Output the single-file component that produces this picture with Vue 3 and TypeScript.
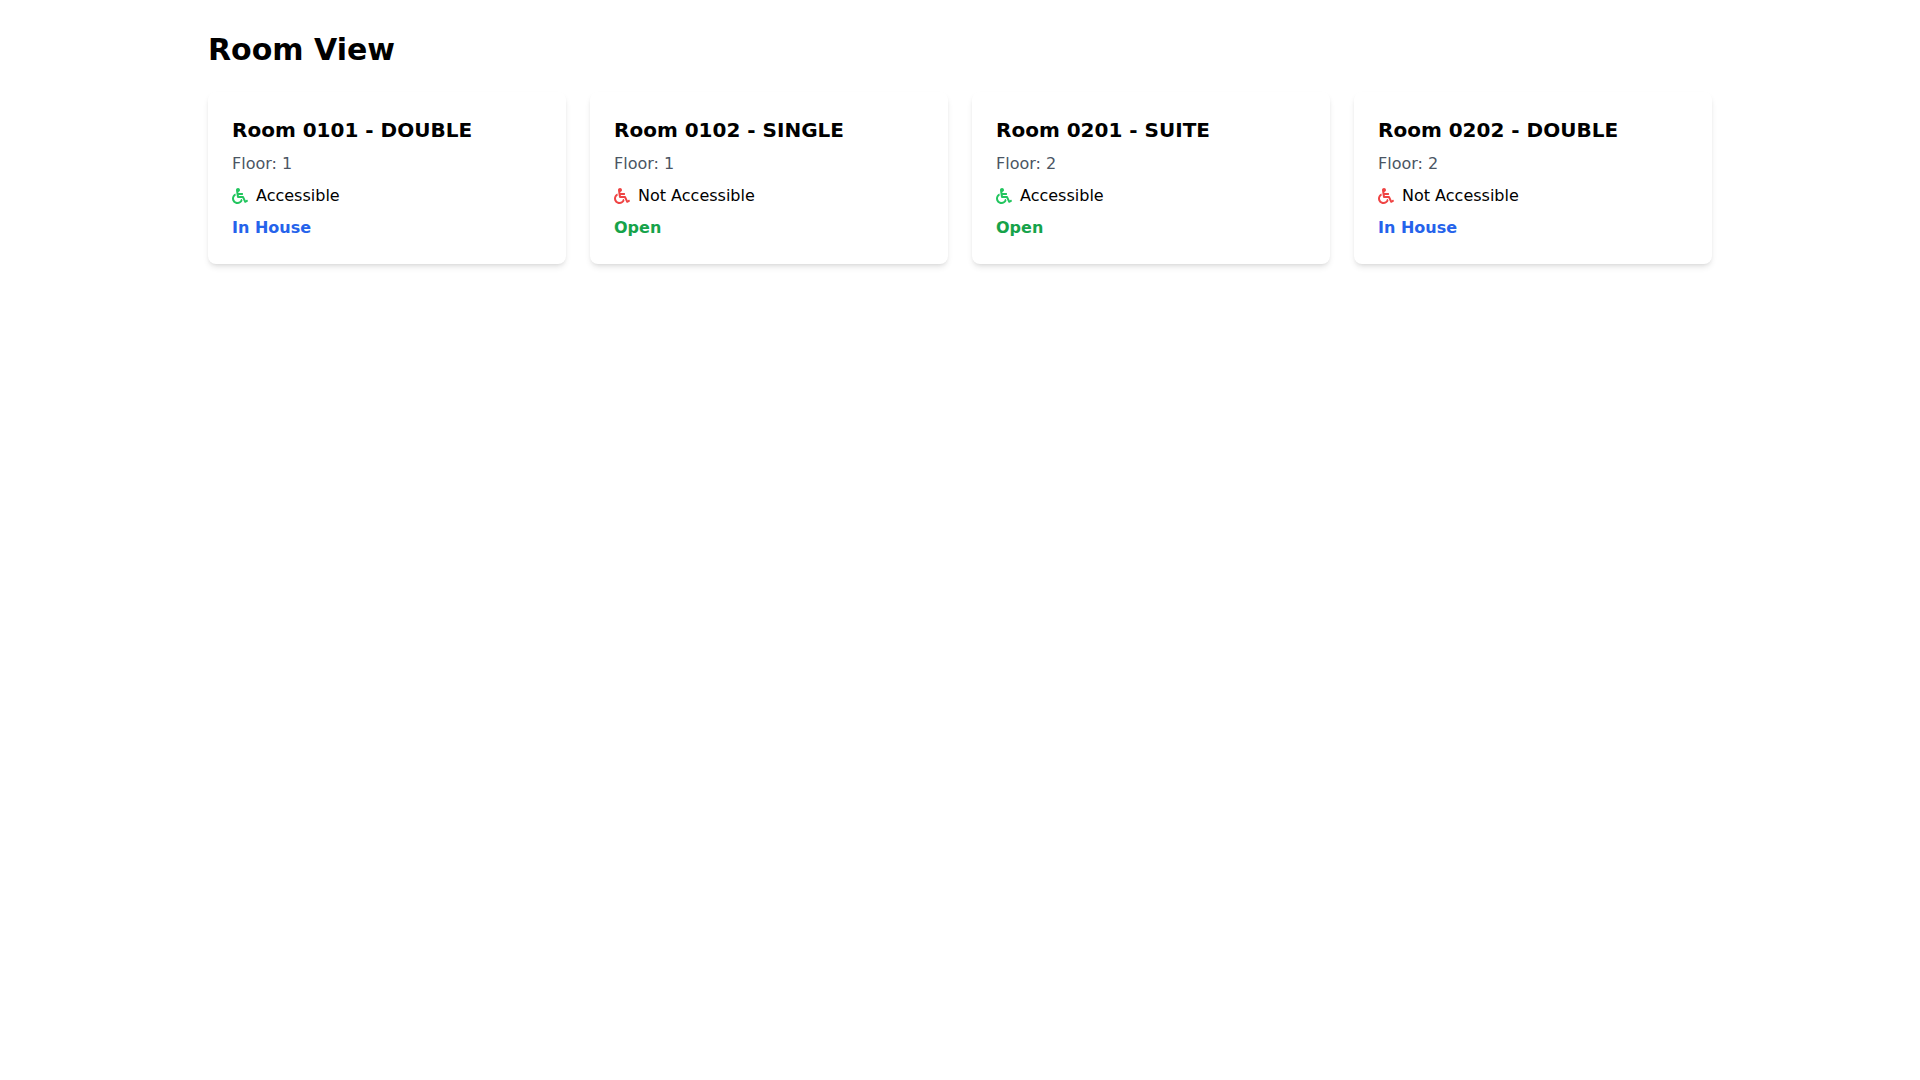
<script setup lang="ts">
interface Room {
  number: string
  type: string
  floor: number
  accessible: boolean
  status: 'In House' | 'Open'
}

const rooms: Room[] = [
  { number: '0101', type: 'DOUBLE', floor: 1, accessible: true, status: 'In House' },
  { number: '0102', type: 'SINGLE', floor: 1, accessible: false, status: 'Open' },
  { number: '0201', type: 'SUITE', floor: 2, accessible: true, status: 'Open' },
  { number: '0202', type: 'DOUBLE', floor: 2, accessible: false, status: 'In House' },
]
</script>

<template>
  <main class="page">
    <h1 class="title">Room View</h1>
    <div class="grid">
      <article v-for="room in rooms" :key="room.number" class="card">
        <h2 class="name">Room {{ room.number }} - {{ room.type }}</h2>
        <p class="floor">Floor: {{ room.floor }}</p>
        <div class="access">
          <svg class="icon" :class="room.accessible ? 'yes' : 'no'" viewBox="0 0 512 512" fill="currentColor" aria-hidden="true">
            <path d="M496.101 385.669l14.227 28.663c3.929 7.915.697 17.516-7.218 21.445l-65.465 32.886c-16.049 7.967-35.556 1.194-43.189-15.055L331.679 320H192c-15.925 0-29.426-11.71-31.679-27.475C126.433 55.308 128.38 70.044 128 64c0-36.358 30.318-65.635 67.052-63.929 33.271 1.545 60.048 28.905 60.925 62.201.868 32.933-23.152 60.423-54.608 65.039l4.67 32.69H336c8.837 0 16 7.163 16 16v32c0 8.837-7.163 16-16 16H215.182l4.572 32H352a32 32 0 0 1 28.962 18.392L438.477 396.8l36.178-18.349c7.915-3.929 17.517-.697 21.446 7.218zM311.358 352h-24.506c-7.788 54.204-54.528 96-110.852 96-61.757 0-112-50.243-112-112 0-41.505 22.694-77.809 56.324-97.156-3.712-25.965-6.844-47.86-9.488-66.333C45.956 198.464 0 261.963 0 336c0 97.047 78.953 176 176 176 71.87 0 133.806-43.308 161.11-105.192L311.358 352z" />
          </svg>
          <span>{{ room.accessible ? 'Accessible' : 'Not Accessible' }}</span>
        </div>
        <p class="status" :class="room.status === 'Open' ? 'open' : 'in-house'">{{ room.status }}</p>
      </article>
    </div>
  </main>
</template>

<style>
body {
  margin: 0;
  background: #fff;
}
</style>

<style scoped>
.page {
  box-sizing: border-box;
  max-width: 1536px;
  margin: 0 auto;
  padding: 32px 16px;
  font: 16px/24px "DejaVu Sans", sans-serif;
  color: #000;
}
.title {
  margin: 0 0 24px;
  font-size: 30px;
  line-height: 36px;
  font-weight: 700;
}
.grid {
  display: grid;
  grid-template-columns: repeat(4, minmax(0, 1fr));
  gap: 24px;
}
.card {
  padding: 24px;
  border-radius: 8px;
  background: #fff;
  box-shadow: 0 4px 6px -1px rgb(0 0 0 / 10%), 0 2px 4px -2px rgb(0 0 0 / 10%);
}
.name {
  margin: 0 0 8px;
  font-size: 20px;
  line-height: 28px;
  font-weight: 600;
}
.floor {
  margin: 0 0 8px;
  color: #4b5563;
}
.access {
  display: flex;
  align-items: center;
  gap: 8px;
  margin-bottom: 8px;
}
.icon {
  width: 16px;
  height: 16px;
}
.yes {
  color: #22c55e;
}
.no {
  color: #ef4444;
}
.status {
  margin: 0;
  font-weight: 600;
}
.open {
  color: #16a34a;
}
.in-house {
  color: #2563eb;
}
@media (max-width: 1023px) {
  .grid {
    grid-template-columns: repeat(2, minmax(0, 1fr));
  }
}
</style>
